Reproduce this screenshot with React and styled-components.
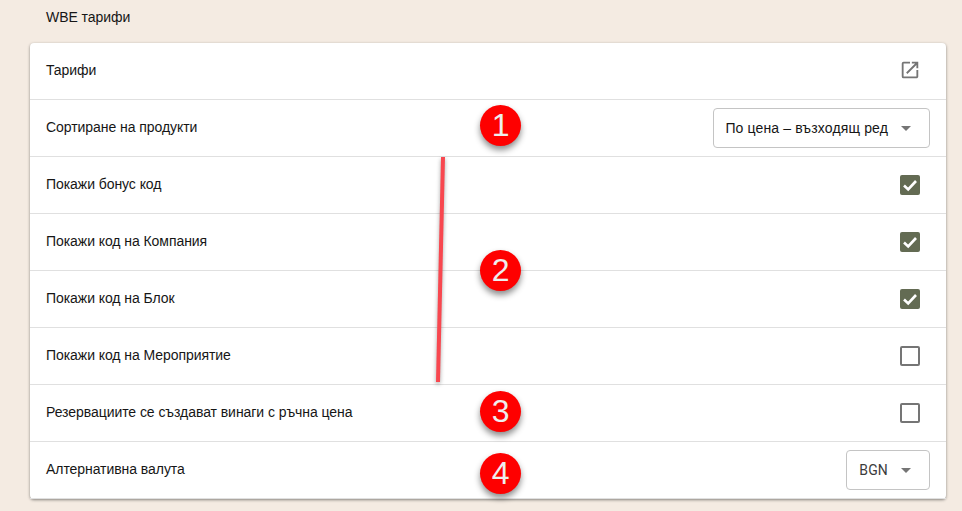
import { createGlobalStyle, styled } from 'styled-components'
import { MdOpenInNew, MdArrowDropDown } from 'react-icons/md'

const Global = createGlobalStyle`
  html, body {
    margin: 0;
    height: 100%;
    background: #f4ebe2;
    overflow: hidden;
  }
`

const Page = styled.div`
  width: 962px;
  height: 511px;
  box-sizing: border-box;
  padding: 0 16px 0 30px;
  font-family: "Liberation Sans", Arial, sans-serif;
  font-size: 14px;
  letter-spacing: -.06px;
  color: #161616;
`

const Title = styled.div`
  height: 43px;
  padding: 9px 0 0 16px;
  box-sizing: border-box;
  line-height: 16px;
`

const Card = styled.div`
  position: relative;
  background: #fff;
  border-radius: 4px;
  box-shadow: 0 1px 3px rgba(0, 0, 0, .45);
`

const Row = styled.div`
  height: 57px;
  box-sizing: border-box;
  padding: 0 16px 2px;
  display: flex;
  align-items: center;
  justify-content: space-between;
  border-bottom: 1px solid #e0e0e0;

  &:last-of-type {
    height: 56px;
    border-bottom: none;
  }
`

const IconSlot = styled.div`
  width: 40px;
  display: flex;
  justify-content: center;
  color: #757575;
  font-size: 22px;
`

const Select = styled.div`
  height: 40px;
  box-sizing: border-box;
  margin-top: 2px;
  padding: 0 11px 0 ${p => p.$muted ? 12 : 11}px;
  display: flex;
  align-items: center;
  gap: 6px;
  border: 1px solid #c4c4c4;
  border-radius: 4px;
  letter-spacing: .14px;
  font-family: ${p => p.$muted ? 'Roboto, sans-serif' : 'inherit'};
  color: ${p => p.$muted ? '#3c3c3c' : 'inherit'};
  svg {
    color: #757575;
    font-size: 24px;
  }
`

const Check = styled.div`
  width: 20px;
  height: 20px;
  box-sizing: border-box;
  margin: 2px 10px 0 0;
  border-radius: 2px;
  border: ${p => p.$on ? 'none' : '2px solid #757575'};
  background: ${p => p.$on ? '#636b53' : 'transparent'};
`

const Tick = styled.svg`
  display: block;
  fill: none;
  stroke: #fff;
  stroke-width: 2.6;
`

const Stroke = styled.svg`
  position: absolute;
  left: 403px;
  top: 112px;
  overflow: visible;
  filter: drop-shadow(0 2px 2px rgba(0, 0, 0, .35));
`

const Badge = styled.div`
  position: absolute;
  left: 450px;
  top: ${p => p.$top}px;
  width: 41px;
  height: 41px;
  display: flex;
  align-items: center;
  justify-content: center;
  border-radius: 50%;
  background: #fe0000;
  color: #eee;
  font-family: "Liberation Sans", Arial, sans-serif;
  font-size: 32px;
  box-shadow: 0 4px 6px rgba(0, 0, 0, .45);
`

const rows = [
  ['Покажи бонус код', true],
  ['Покажи код на Компания', true],
  ['Покажи код на Блок', true],
  ['Покажи код на Мероприятие', false],
  ['Резервациите се създават винаги с ръчна цена', false],
]

const App = () => (
  <Page>
    <Global />
    <Title>WBE тарифи</Title>
    <Card>
      <Row>
        Тарифи
        <IconSlot><MdOpenInNew /></IconSlot>
      </Row>
      <Row>
        Сортиране на продукти
        <Select>По цена – възходящ ред <MdArrowDropDown /></Select>
      </Row>
      {rows.map(([label, on]) => (
        <Row key={label}>
          {label}
          <Check $on={on}>
            {on && (
              <Tick width="20" height="20" viewBox="0 0 20 20">
                <path d="M4 10.5 L8.2 14.5 L16 6" />
              </Tick>
            )}
          </Check>
        </Row>
      ))}
      <Row>
        Алтернативна валута
        <Select $muted>BGN <MdArrowDropDown /></Select>
      </Row>
      <Stroke width="10" height="227" viewBox="0 0 10 227">
        <line x1="10" y1="2" x2="5" y2="227" stroke="#f8474f" strokeWidth="4" />
      </Stroke>
      <Badge $top={62}>1</Badge>
      <Badge $top={207}>2</Badge>
      <Badge $top={348}>3</Badge>
      <Badge $top={410}>4</Badge>
    </Card>
  </Page>
)

export default App
